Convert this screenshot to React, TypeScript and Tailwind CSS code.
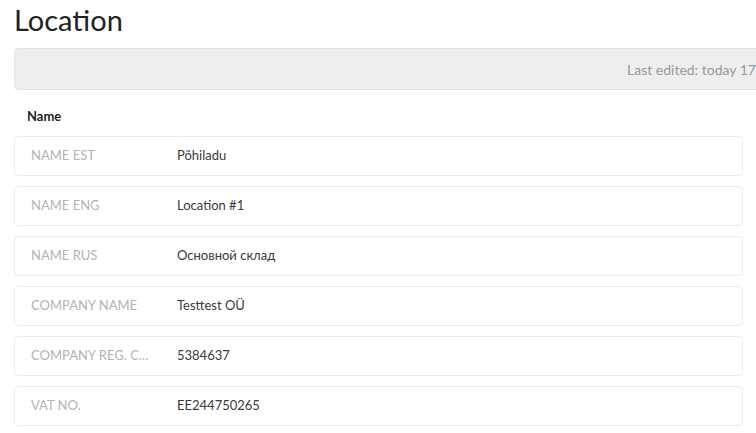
import React from 'react';

type Field = { label: string; value: string };

const fields: Field[] = [
  { label: 'Name est', value: 'Põhiladu' },
  { label: 'Name eng', value: 'Location #1' },
  { label: 'Name rus', value: 'Основной склад' },
  { label: 'Company name', value: 'Testtest OÜ' },
  { label: 'Company reg. code', value: '5384637' },
  { label: 'VAT no.', value: 'EE244750265' },
];

const FieldRow = ({ label, value }: Field) => (
  <div className="flex items-center h-10 border border-[#ebebeb] rounded-[4px] bg-white">
    <div className="w-[162px] pl-[16px] pr-[22px] shrink-0 truncate uppercase text-[13px] text-[#b3b3b3]">
      {label}
    </div>
    <div className="text-[13px] text-[#3a3a3a]">{value}</div>
  </div>
);

export default function App() {
  return (
    <div
      className="w-[756px] h-[433px] overflow-hidden bg-white"
      style={{ fontFamily: 'Lato, "Open Sans", sans-serif' }}
    >
      <div className="pl-[14px] w-[820px]">
        <h1 className="text-[29px] leading-[38px] text-[#222] pt-[1px]">Location</h1>

        <div className="mt-[9px] h-[42px] w-[800px] bg-[#eeeeee] border border-[#e4e4e4] rounded-[4px] flex items-center pl-[612px]">
          <span className="text-[14px] text-[#999] whitespace-nowrap">Last edited: today 17:45</span>
        </div>

        <div className="w-[729px]">
          <div className="pl-[13px] pt-[18px] pb-[12px] text-[13px] font-bold text-[#222] leading-[16px]">
            Name
          </div>
          <div className="flex flex-col gap-[10px]">
            {fields.map((f) => (
              <FieldRow key={f.label} {...f} />
            ))}
          </div>
        </div>
      </div>
    </div>
  );
}
